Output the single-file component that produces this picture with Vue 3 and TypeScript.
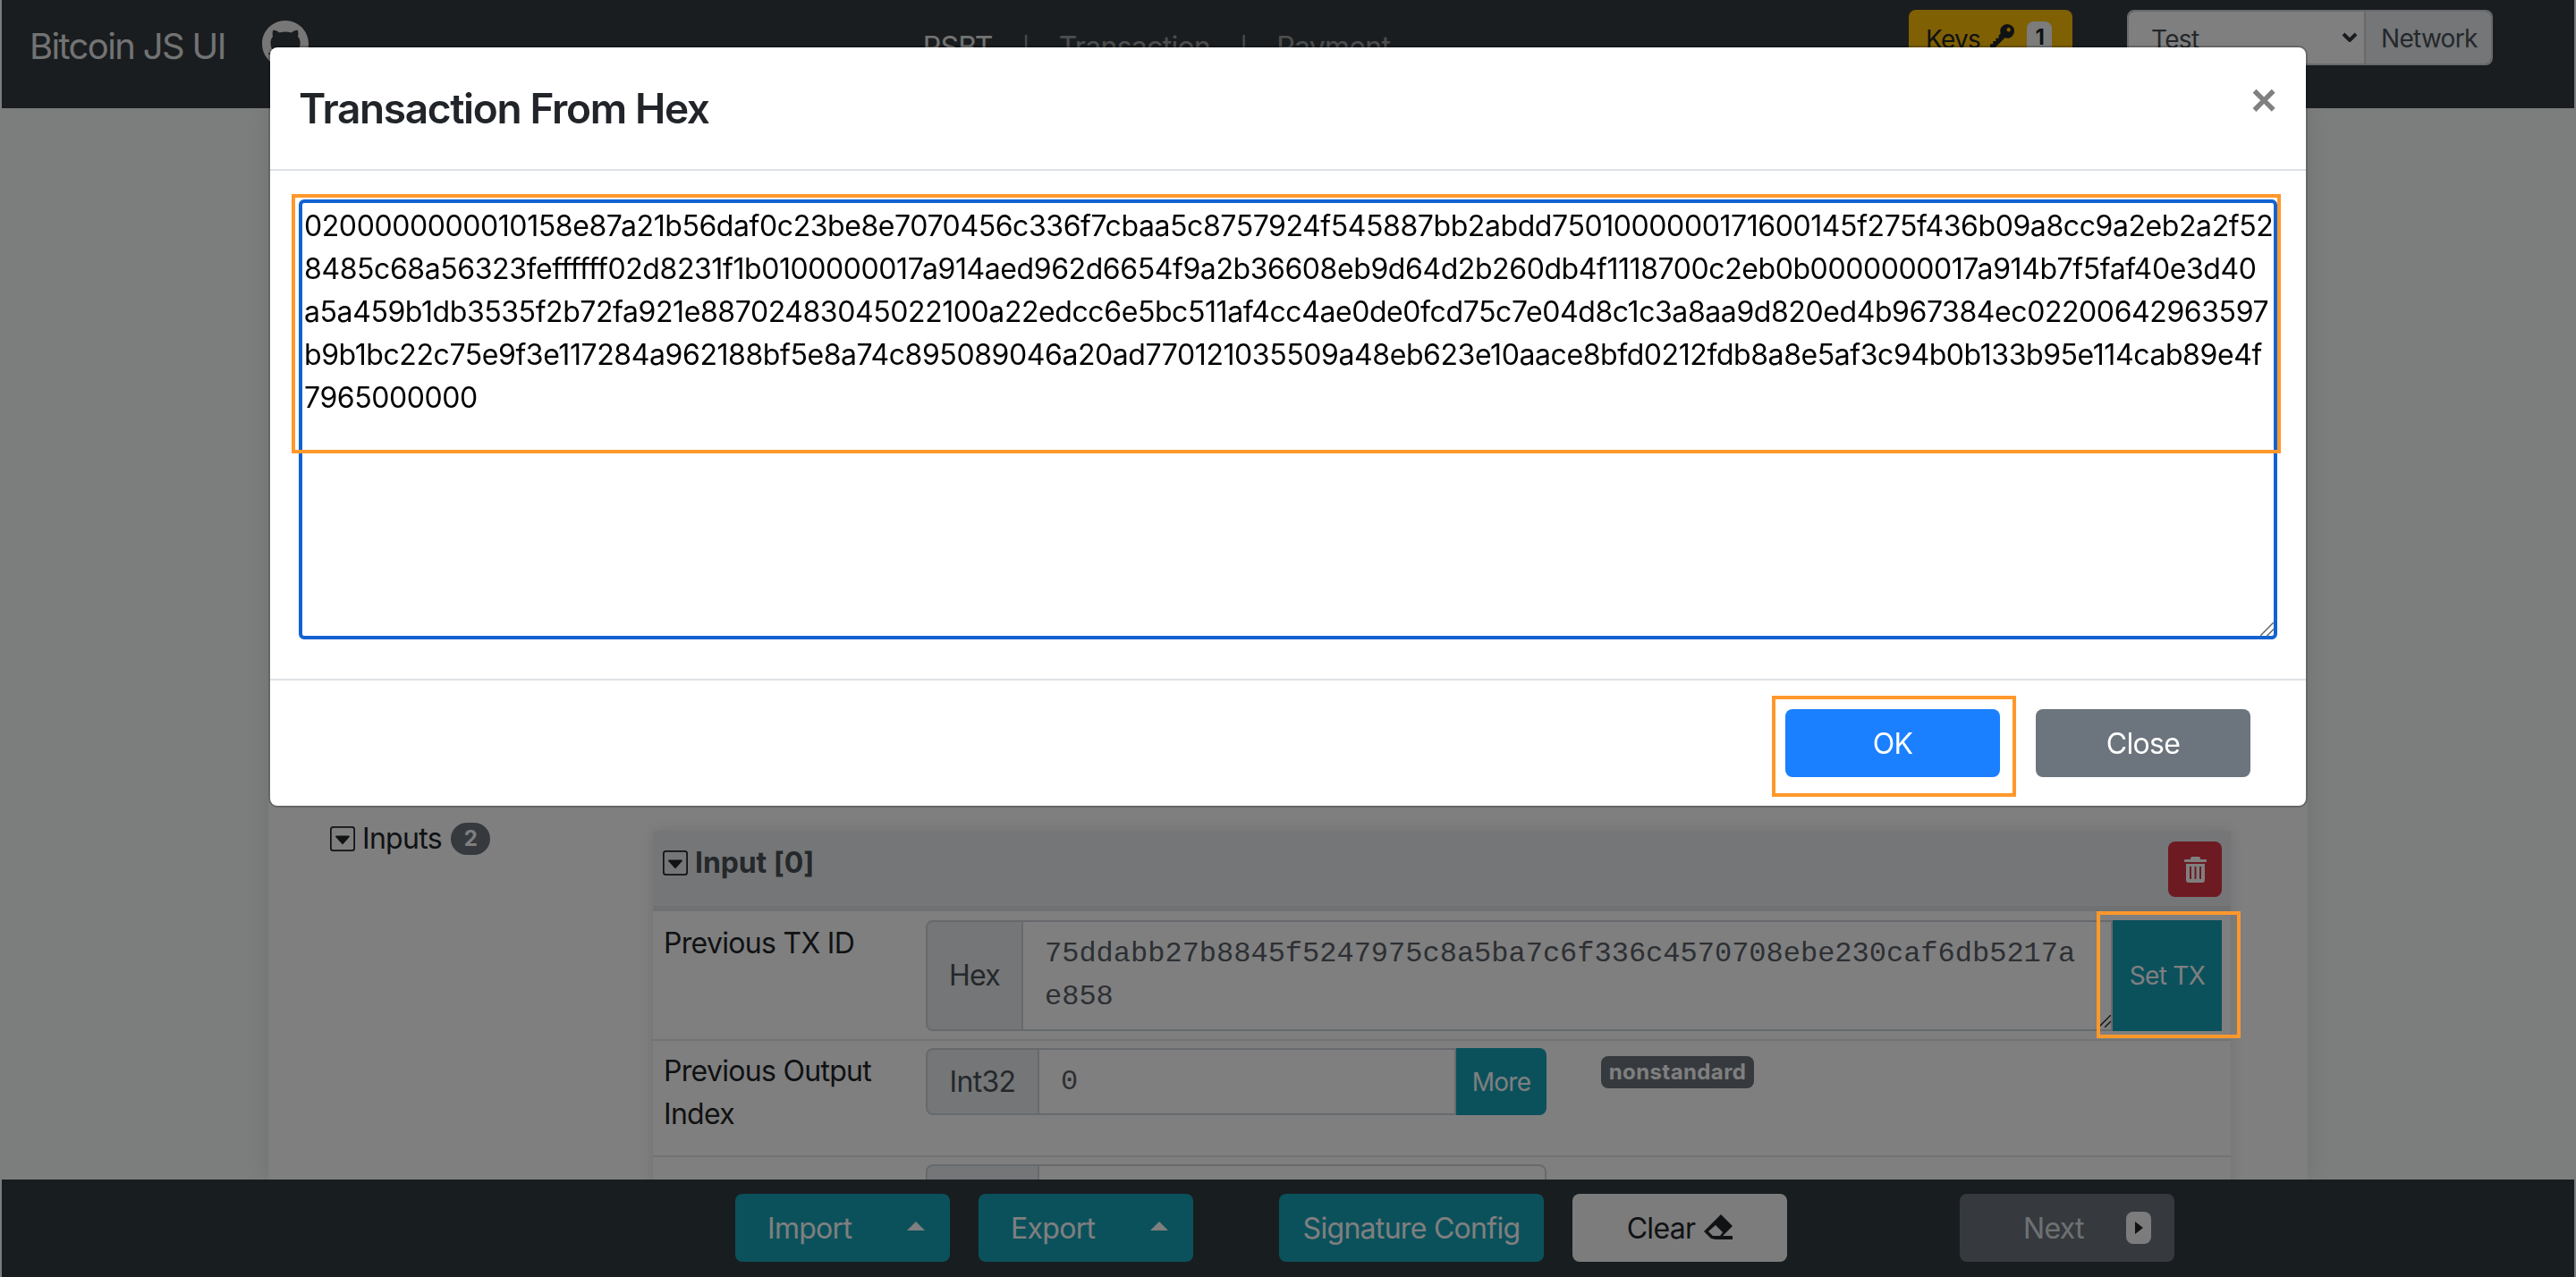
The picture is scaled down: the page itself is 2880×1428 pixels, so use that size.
<script setup lang="ts">
const hexLines: string[] = [
  '0200000000010158e87a21b56daf0c23be8e7070456c336f7cbaa5c8757924f545887bb2abdd7501000000171600145f275f436b09a8cc9a2eb2a2f52',
  '8485c68a56323feffffff02d8231f1b0100000017a914aed962d6654f9a2b36608eb9d64d2b260db4f1118700c2eb0b0000000017a914b7f5faf40e3d40',
  'a5a459b1db3535f2b72fa921e88702483045022100a22edcc6e5bc511af4cc4ae0de0fcd75c7e04d8c1c3a8aa9d820ed4b967384ec02200642963597',
  'b9b1bc22c75e9f3e117284a962188bf5e8a74c895089046a20ad770121035509a48eb623e10aace8bfd0212fdb8a8e5af3c94b0b133b95e114cab89e4f',
  '7965000000',
]
const txHex: string = hexLines.join('\n')
const prevTx = '75ddabb27b8845f5247975c8a5ba7c6f336c4570708ebe230caf6db5217ae858'
</script>

<template>
  <div class="page">
    <header class="nav">
      <span class="brand">Bitcoin JS UI</span>
      <svg class="github" viewBox="0 0 16 16" fill="currentColor">
        <path d="M8 0C3.58 0 0 3.58 0 8c0 3.54 2.29 6.53 5.47 7.59.4.07.55-.17.55-.38 0-.19-.01-.82-.01-1.49-2.01.37-2.53-.49-2.69-.94-.09-.23-.48-.94-.82-1.13-.28-.15-.68-.52-.01-.53.63-.01 1.08.58 1.23.82.72 1.21 1.87.87 2.33.66.07-.52.28-.87.51-1.07-1.78-.2-3.64-.89-3.64-3.95 0-.87.31-1.59.82-2.15-.08-.2-.36-1.02.08-2.12 0 0 .67-.21 2.2.82.64-.18 1.32-.27 2-.27.68 0 1.36.09 2 .27 1.53-1.04 2.2-.82 2.2-.82.44 1.1.16 1.92.08 2.12.51.56.82 1.27.82 2.15 0 3.07-1.87 3.75-3.65 3.95.29.25.54.73.54 1.48 0 1.07-.01 1.93-.01 2.2 0 .21.15.46.55.38A8.013 8.013 0 0016 8c0-4.42-3.58-8-8-8z" />
      </svg>
      <nav class="links">
        <span class="link active">PSBT</span>
        <span class="sep">|</span>
        <span class="link">Transaction</span>
        <span class="sep">|</span>
        <span class="link">Payment</span>
      </nav>
      <button class="keys">
        Keys
        <svg class="key" viewBox="0 0 16 16" fill="currentColor">
          <path transform="rotate(135 8 8)" d="M3.5 11.5a3.5 3.5 0 1 1 3.163-5H14L15.5 8 14 9.5l-1-1-1 1-1-1-1 1-1-1-1 1H6.663a3.5 3.5 0 0 1-3.163 2zM2.5 9a1 1 0 1 0 0-2 1 1 0 0 0 0 2z" />
        </svg>
        <span class="keys-badge">1</span>
      </button>
      <div class="network">
        <div class="net-select">
          <span>Test</span>
          <svg class="chevron" viewBox="0 0 18 11"><path d="M2 2l7 7 7-7" fill="none" stroke="currentColor" stroke-width="4" /></svg>
        </div>
        <span class="net-addon">Network</span>
      </div>
    </header>

    <main class="main">
      <div class="container">
        <div class="inputs-row">
          <div class="inputs-label">
            <svg class="square-icon" viewBox="0 0 16 16" fill="currentColor">
              <path d="M3.626 6.832A.5.5 0 0 1 4 6h8a.5.5 0 0 1 .374.832l-4 4.5a.5.5 0 0 1-.748 0l-4-4.5z" />
              <path d="M0 2a2 2 0 0 1 2-2h12a2 2 0 0 1 2 2v12a2 2 0 0 1-2 2H2a2 2 0 0 1-2-2V2zm15 0a1 1 0 0 0-1-1H2a1 1 0 0 0-1 1v12a1 1 0 0 0 1 1h12a1 1 0 0 0 1-1V2z" />
            </svg>
            <span>Inputs</span>
            <span class="count">2</span>
          </div>
          <section class="card">
            <div class="card-head">
              <svg class="square-icon" viewBox="0 0 16 16" fill="currentColor">
                <path d="M3.626 6.832A.5.5 0 0 1 4 6h8a.5.5 0 0 1 .374.832l-4 4.5a.5.5 0 0 1-.748 0l-4-4.5z" />
                <path d="M0 2a2 2 0 0 1 2-2h12a2 2 0 0 1 2 2v12a2 2 0 0 1-2 2H2a2 2 0 0 1-2-2V2zm15 0a1 1 0 0 0-1-1H2a1 1 0 0 0-1 1v12a1 1 0 0 0 1 1h12a1 1 0 0 0 1-1V2z" />
              </svg>
              <strong>Input [0]</strong>
              <button class="trash">
                <svg viewBox="0 0 25 29" fill="currentColor">
                  <path d="M9 0h7a2 2 0 0 1 2 2v1h6a1 1 0 0 1 1 1v1a1 1 0 0 1-1 1H1a1 1 0 0 1-1-1V4a1 1 0 0 1 1-1h6V2a2 2 0 0 1 2-2z" />
                  <path fill-rule="evenodd" d="M2 8h21v18a3 3 0 0 1-3 3H5a3 3 0 0 1-3-3V8zm4 3v14h2V11H6zm5.500 0v14h2V11h-2zM17 11v14h2V11h-2z" />
                </svg>
              </button>
            </div>
            <div class="row row-tx">
              <label class="row-label">Previous TX ID</label>
              <div class="group group-tx">
                <span class="addon addon-hex">Hex</span>
                <div class="tx-wrap">
                  <textarea class="mono tx-area" :value="prevTx" spellcheck="false"></textarea>
                  <svg class="grip grip-tx" viewBox="0 0 16 16"><path d="M0 16L16 0M8 16l8-8" /></svg>
                </div>
                <button class="teal-square set-tx">Set TX</button>
              </div>
            </div>
            <div class="row row-index">
              <label class="row-label">Previous Output Index</label>
              <div class="group group-short">
                <span class="addon addon-int">Int32</span>
                <input class="mono short-input" value="0" />
                <button class="teal-square more">More</button>
              </div>
              <span class="tag">nonstandard</span>
            </div>
            <div class="row">
              <span class="row-label"></span>
              <div class="group group-short">
                <span class="addon addon-int">&nbsp;</span>
                <input class="mono short-input end" />
              </div>
            </div>
          </section>
        </div>
      </div>
    </main>

    <footer class="bottom">
      <button class="btn teal split">Import<i class="caret"></i></button>
      <button class="btn teal split export">Export<i class="caret"></i></button>
      <button class="btn teal sig">Signature Config</button>
      <button class="btn light clear">
        Clear
        <svg class="eraser" viewBox="0 0 32 28" fill="currentColor">
          <path fill-rule="evenodd" d="M19 0l13 13-10 10-1 1h11v4H13l-5-1-8-8L19 0zM13 12l-8 7 5 5h8l3-4-8-8z" />
        </svg>
      </button>
      <button class="btn next">
        Next
        <span class="next-badge">
          <svg viewBox="0 0 9 14" fill="currentColor"><path d="M0 0l9 7-9 7z" /></svg>
        </span>
      </button>
    </footer>

    <div class="backdrop"></div>

    <div class="modal-layer">
      <div class="modal">
        <div class="modal-head">
          <h5>Transaction From Hex</h5>
          <span class="close-x">×</span>
        </div>
        <div class="modal-body">
          <div class="hex-wrap">
            <textarea class="hex-area" :value="txHex" spellcheck="false"></textarea>
            <svg class="grip grip-hex" viewBox="0 0 16 16"><path d="M0 16L16 0M8 16l8-8" /></svg>
          </div>
        </div>
        <div class="modal-foot">
          <button class="btn ok">OK</button>
          <button class="btn close">Close</button>
        </div>
      </div>
    </div>

    <div class="mark mark-area"></div>
    <div class="mark mark-ok"></div>
    <div class="mark mark-tx"></div>
  </div>
</template>

<style>
html,
body {
  margin: 0;
  background: #f8fafa;
  overflow: hidden;
}
</style>

<style scoped>
* {
  box-sizing: border-box;
}
.page {
  height: 100vh;
  padding: 0 2px;
  display: flex;
  flex-direction: column;
  overflow: hidden;
  font-family: Inter, "Liberation Sans", sans-serif;
  font-size: 32px;
  line-height: 48px;
  letter-spacing: -0.7px;
  color: #212529;
}
button,
input,
textarea {
  font-family: inherit;
  letter-spacing: inherit;
}

/* top bar */
.nav {
  flex: none;
  height: 121px;
  background: #343a40;
  display: flex;
  align-items: flex-start;
  padding: 0 91px 0 31px;
  position: relative;
  z-index: 1;
}
.brand {
  font-size: 40px;
  line-height: 60px;
  padding-top: 22px;
  color: rgba(255, 255, 255, 0.88);
  letter-spacing: -1.65px;
}
.github {
  width: 52px;
  height: 52px;
  margin: 23px 0 0 41px;
  color: #eee;
}
.links {
  margin: 29px 0 0 687px;
  display: flex;
  align-items: baseline;
  gap: 33px;
}
.link {
  color: rgba(255, 255, 255, 0.5);
}
.sep {
  color: rgba(255, 255, 255, 0.5);
  font-size: 26px;
}
.link.active {
  color: rgba(255, 255, 255, 0.9);
}
.keys {
  margin: 11px 0 0 auto;
  width: 183px;
  height: 62px;
  background: #ffc107;
  border: 0;
  border-radius: 8px;
  font-size: 28px;
  color: #212529;
  display: flex;
  align-items: center;
  padding: 4px 0 0 19px;
  gap: 5px;
}
.key {
  width: 36px;
  height: 36px;
  margin-top: -4px;
}
.keys-badge {
  width: 28px;
  height: 36px;
  margin: -4px 0 0 6px;
  border-radius: 8px;
  background: #f8f9fa;
  font-size: 24px;
  font-weight: 700;
  line-height: 36px;
  text-align: center;
}
.network {
  margin: 11px 0 0 61px;
  width: 409px;
  height: 62px;
  display: flex;
  border: 2px solid #ced4da;
  border-radius: 8px;
  overflow: hidden;
  color: #495057;
  font-size: 28px;
}
.net-select {
  width: 265px;
  background: #fff;
  display: flex;
  align-items: center;
  justify-content: space-between;
  padding: 4px 7px 0 25px;
  border-right: 2px solid #ced4da;
}
.chevron {
  width: 18px;
  height: 11px;
  margin-top: -6px;
  color: #343a40;
}
.net-addon {
  flex: 1;
  background: #e9ecef;
  padding-left: 17px;
  line-height: 60px;
}

/* page content */
.main {
  flex: 1;
  min-height: 0;
  overflow: hidden;
}
.container {
  width: 2280px;
  height: 100%;
  margin: 0 auto 0 298px;
  background: #fff;
  box-shadow: 0 0 24px rgba(0, 0, 0, 0.1);
  padding: 793px 0 0 69px;
}
.inputs-row {
  display: flex;
  align-items: flex-start;
}
.inputs-label {
  width: 361px;
  flex: none;
  display: flex;
  align-items: center;
  gap: 8px;
}
.square-icon {
  width: 28px;
  height: 28px;
  flex: none;
}
.count {
  width: 44px;
  height: 36px;
  margin-left: 2px;
  border-radius: 18px;
  background: #6c757d;
  color: #fff;
  font-size: 24px;
  font-weight: 700;
  line-height: 36px;
  text-align: center;
}
.card {
  width: 1764px;
  margin-top: 15px;
  box-shadow: 0 0 16px rgba(0, 0, 0, 0.12);
}
.card-head {
  height: 90px;
  background: #e9ecef;
  border-bottom: 6px solid #dfe2e5;
  display: flex;
  align-items: flex-start;
  padding: 12px 10px 0 11px;
  gap: 8px;
}
.card-head strong {
  font-weight: 700;
  letter-spacing: -0.1px;
  color: #495057;
}
.card-head .square-icon {
  margin-top: 10px;
}
.trash {
  margin-left: auto;
  width: 60px;
  height: 62px;
  border: 0;
  border-radius: 8px;
  background: #dc3545;
  color: #fff;
  padding: 0;
  display: flex;
  align-items: center;
  justify-content: center;
}
.trash svg {
  width: 25px;
  height: 29px;
}
.row {
  display: flex;
  align-items: flex-start;
  border-bottom: 2px solid #e6e6e6;
  padding: 8px 0 0 12px;
}
.row-tx {
  height: 145px;
  padding-top: 10px;
}
.row-index {
  height: 130px;
}
.row-label {
  width: 293px;
  flex: none;
  padding: 2px 20px 0 0;
}
.group {
  display: flex;
  flex: none;
}
.group-tx {
  width: 1449px;
  height: 124px;
}
.group-short {
  width: 694px;
  height: 75px;
}
.addon {
  flex: none;
  background: #e9ecef;
  border: 2px solid #ced4da;
  border-radius: 8px 0 0 8px;
  color: #495057;
  display: flex;
  align-items: center;
  justify-content: center;
}
.addon-hex {
  width: 109px;
}
.addon-int {
  width: 127px;
}
.mono {
  font-family: "Liberation Mono", monospace;
  letter-spacing: 0;
  font-size: 32px;
  line-height: 48px;
  color: #5a6168;
  background: #fff;
  border: 2px solid #ced4da;
  border-left: 0;
  outline: none;
}
.tx-wrap {
  flex: 1;
  min-width: 0;
  position: relative;
  display: flex;
}
.tx-area {
  flex: 1;
  min-width: 0;
  padding: 12px 22px 0 24px;
  resize: none;
  overflow: hidden;
  border-radius: 0;
  word-break: break-all;
}
.grip {
  position: absolute;
  fill: none;
  pointer-events: none;
}
.grip-tx {
  width: 14px;
  height: 14px;
  right: 2px;
  bottom: 4px;
  stroke: #222;
  stroke-width: 1.6;
}
.grip-hex {
  width: 15px;
  height: 15px;
  right: 4px;
  bottom: 4px;
  stroke: #666;
  stroke-width: 1.6;
}
.short-input {
  flex: 1;
  min-width: 0;
  padding: 0 24px;
  border-radius: 0;
}
.short-input.end {
  border-radius: 0 8px 8px 0;
}
.teal-square {
  flex: none;
  background: #17a2b8;
  border: 0;
  color: #fff;
  padding: 0;
  font-size: 28px;
}
.set-tx {
  width: 122px;
}
.more {
  width: 101px;
  border-radius: 0 8px 8px 0;
}
.tag {
  margin: 9px 0 0 61px;
  height: 36px;
  width: 171px;
  border-radius: 8px;
  background: #6c757d;
  color: #fff;
  font-size: 24px;
  font-weight: 700;
  line-height: 36px;
  letter-spacing: 0.4px;
  text-align: center;
}

/* bottom bar */
.bottom {
  flex: none;
  height: 109px;
  background: #313a40;
  display: flex;
  align-items: flex-start;
  padding: 16px 0 0 820px;
  position: relative;
  z-index: 1;
}
.btn {
  width: 240px;
  height: 76px;
  border: 0;
  border-radius: 8px;
  font-size: 32px;
  color: #fff;
  flex: none;
}
.teal {
  background: #17a2b8;
}
.split {
  display: flex;
  align-items: center;
  justify-content: space-between;
  padding: 0 28px 0 36px;
}
.caret {
  width: 0;
  height: 0;
  border-left: 10px solid transparent;
  border-right: 10px solid transparent;
  border-bottom: 10px solid #fff;
  margin-top: -4px;
}
.export {
  margin-left: 32px;
}
.sig {
  width: 296px;
  margin-left: 96px;
  padding: 0;
}
.light {
  background: #f8f9fa;
  color: #212529;
}
.clear {
  margin-left: 32px;
  display: flex;
  align-items: center;
  justify-content: center;
  gap: 10px;
}
.eraser {
  width: 32px;
  height: 28px;
  margin-top: -2px;
}
.next {
  margin-left: 193px;
  background: #6c757d;
  color: #dee2e6;
  display: flex;
  align-items: center;
  padding: 0 26px 0 71px;
  justify-content: space-between;
}
.next-badge {
  width: 28px;
  height: 36px;
  border-radius: 8px;
  background: #f8f9fa;
  color: #212529;
  display: flex;
  align-items: center;
  justify-content: center;
}
.next-badge svg {
  width: 9px;
  height: 14px;
}

/* modal */
.backdrop {
  position: fixed;
  inset: 0;
  z-index: 2;
  background: rgba(0, 0, 0, 0.5);
}
.modal-layer {
  position: fixed;
  inset: 0;
  z-index: 3;
  display: flex;
  justify-content: center;
  align-items: flex-start;
  padding-top: 51px;
}
.modal {
  width: 2280px;
  background: #fff;
  background-clip: padding-box;
  border: 2px solid rgba(0, 0, 0, 0.2);
  border-radius: 10px;
}
.modal-head {
  height: 138px;
  border-bottom: 2px solid #dee2e6;
  display: flex;
  align-items: center;
  justify-content: space-between;
  padding: 0 32px;
}
.modal-head h5 {
  margin: 0;
  font-size: 46px;
  line-height: 60px;
  font-weight: 600;
  letter-spacing: -1.35px;
  color: #212529;
}
.close-x {
  font-family: "Liberation Sans", sans-serif;
  font-size: 50px;
  font-weight: 700;
  color: #808080;
  line-height: 48px;
  margin-right: 1px;
  margin-top: -18px;
}
.modal-body {
  padding: 32px 32px 44px;
  display: flex;
}
.hex-wrap {
  position: relative;
  display: flex;
  flex: none;
}
.hex-area {
  width: 2212px;
  height: 492px;
  flex: none;
  padding: 2px;
  border: 4px solid #1162d1;
  border-radius: 6px;
  outline: none;
  resize: none;
  overflow: hidden;
  font-family: Inter, sans-serif;
  font-size: 32px;
  line-height: 48px;
  letter-spacing: -0.42px;
  color: #000;
  white-space: pre;
}
.modal-foot {
  height: 142px;
  border-top: 2px solid #dee2e6;
  display: flex;
  justify-content: flex-end;
  align-items: flex-start;
  gap: 40px;
  padding: 32px 62px 0 0;
}
.ok {
  background: #1a80ff;
}
.close {
  background: #6c757d;
}

/* orange guide marks lying over everything */
.mark {
  position: fixed;
  z-index: 4;
  border: 4px solid #ff982b;
  pointer-events: none;
}
.mark-area {
  left: 326px;
  top: 217px;
  width: 2224px;
  height: 290px;
}
.mark-ok {
  left: 1981px;
  top: 778px;
  width: 273px;
  height: 113px;
}
.mark-tx {
  left: 2344px;
  top: 1019px;
  width: 161px;
  height: 142px;
}
</style>
